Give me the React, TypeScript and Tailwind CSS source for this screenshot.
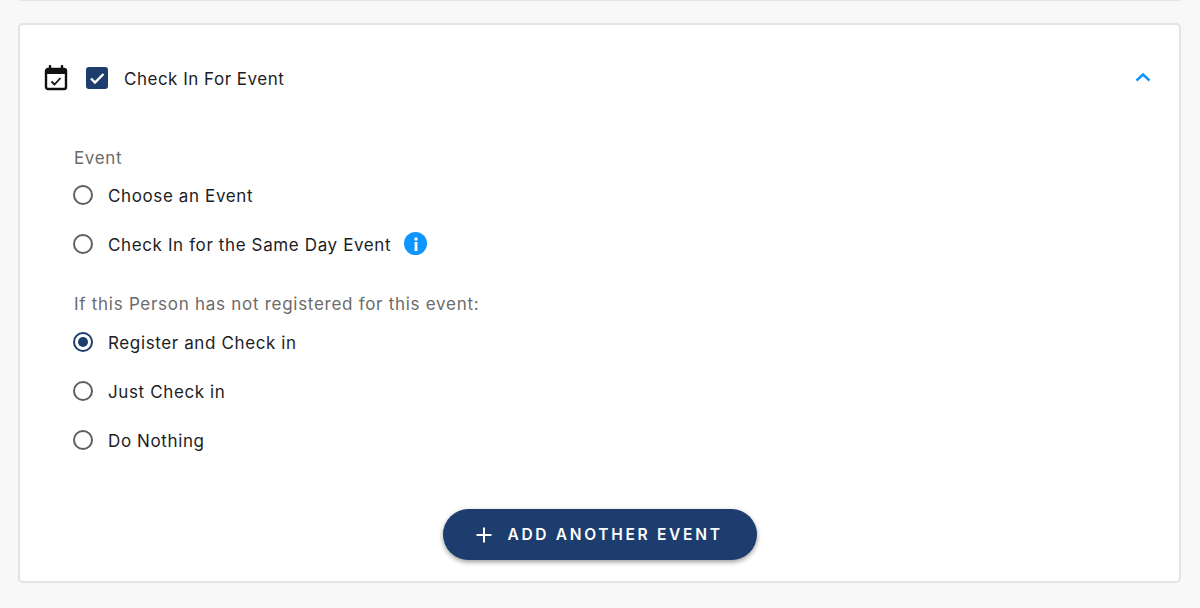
const Radio = ({ label, checked = false, children }: { label: string; checked?: boolean; children?: React.ReactNode }) => (
  <div className="flex h-[49px] items-center">
    <span className={`-ml-[1px] flex h-[20px] w-[20px] shrink-0 items-center justify-center rounded-full border-2 ${checked ? "border-[#1c3d6e]" : "border-[#5f5f5f]"}`}>
      {checked && <span className="h-[10px] w-[10px] rounded-full bg-[#1c3d6e]" />}
    </span>
    <span className="ml-[15px] pt-[4px] text-[17px] tracking-[0.62px] text-[#1d1d1f]">{label}</span>
    {children}
  </div>
);

export default function App() {
  return (
    <div className="h-[608px] w-[1200px] overflow-hidden bg-[#f8f8f8] font-['Inter',sans-serif]">
      <div className="mx-[19px] h-px bg-[#e4e4e4]" />
      <div className="ml-[18px] mr-[19px] mt-[22px] h-[560px] rounded-[5px] border-2 border-[#e3e3e3] bg-white">
        <div className="mt-[40px] flex h-[26px] items-center pl-[24px] pr-[27px]">
          <svg width="24" height="26" viewBox="0 0 24 26" fill="none">
            <path d="M6 1v4M18 1v4" stroke="#111" strokeWidth="2.4" strokeLinecap="round" />
            <rect x="2" y="4" width="20" height="20" rx="2" stroke="#111" strokeWidth="2.4" />
            <rect x="2" y="4" width="20" height="5" fill="#111" />
            <path d="M7.5 16.5l3 3 6-6.5" stroke="#111" strokeWidth="1.8" fill="none" />
          </svg>
          <span className="ml-[18px] flex h-[22px] w-[22px] items-center justify-center rounded-[3px] bg-[#1c3d6e]">
            <svg width="18" height="18" viewBox="0 0 18 18" fill="none">
              <path d="M3 9.5l4 4L15.5 5" stroke="#fff" strokeWidth="2.4" />
            </svg>
          </span>
          <span className="ml-[16px] pt-[4px] text-[17px] tracking-[0.5px] text-[#1d1d1f]">Check In For Event</span>
          <svg className="ml-auto mr-[1px] -mt-[2px]" width="16" height="10" viewBox="0 0 16 10" fill="none">
            <path d="M1.5 8.5L8 2.5l6.5 6" stroke="#0e95ff" strokeWidth="2.4" />
          </svg>
        </div>
        <div className="pl-[54px] pt-[55px]">
          <div className="h-[24px] text-[17px] leading-[24px] tracking-[0.65px] text-[#6b6b6b]">Event</div>
          <div>
            <Radio label="Choose an Event" />
            <Radio label="Check In for the Same Day Event">
              <span className="ml-[13px] flex h-[23px] w-[23px] items-center justify-center rounded-full bg-[#0e95ff]">
                <svg width="6" height="14" viewBox="0 0 6 14" fill="#fff">
                  <circle cx="3" cy="2" r="1.7" />
                  <path d="M1.6 5h2.8v9H1.6z" />
                </svg>
              </span>
            </Radio>
          </div>
          <div className="mt-[24px] h-[24px] text-[17px] leading-[24px] tracking-[0.72px] text-[#6b6b6b]">If this Person has not registered for this event:</div>
          <div className="mt-[1px]">
            <Radio label="Register and Check in" checked />
            <Radio label="Just Check in" />
            <Radio label="Do Nothing" />
          </div>
        </div>
        <div className="mt-[45px] flex justify-center">
          <button className="flex h-[51px] w-[314px] items-center justify-center rounded-full bg-[#1c3d6e] text-white shadow-[0_2px_5px_rgba(0,0,0,0.4)]">
            <svg width="16" height="16" viewBox="0 0 16 16" fill="none">
              <path d="M8 0.5v15M0.5 8h15" stroke="#fff" strokeWidth="2" />
            </svg>
            <span className="ml-[15px] text-[15.5px] font-semibold tracking-[2.7px]">ADD ANOTHER EVENT</span>
          </button>
        </div>
      </div>
    </div>
  );
}
